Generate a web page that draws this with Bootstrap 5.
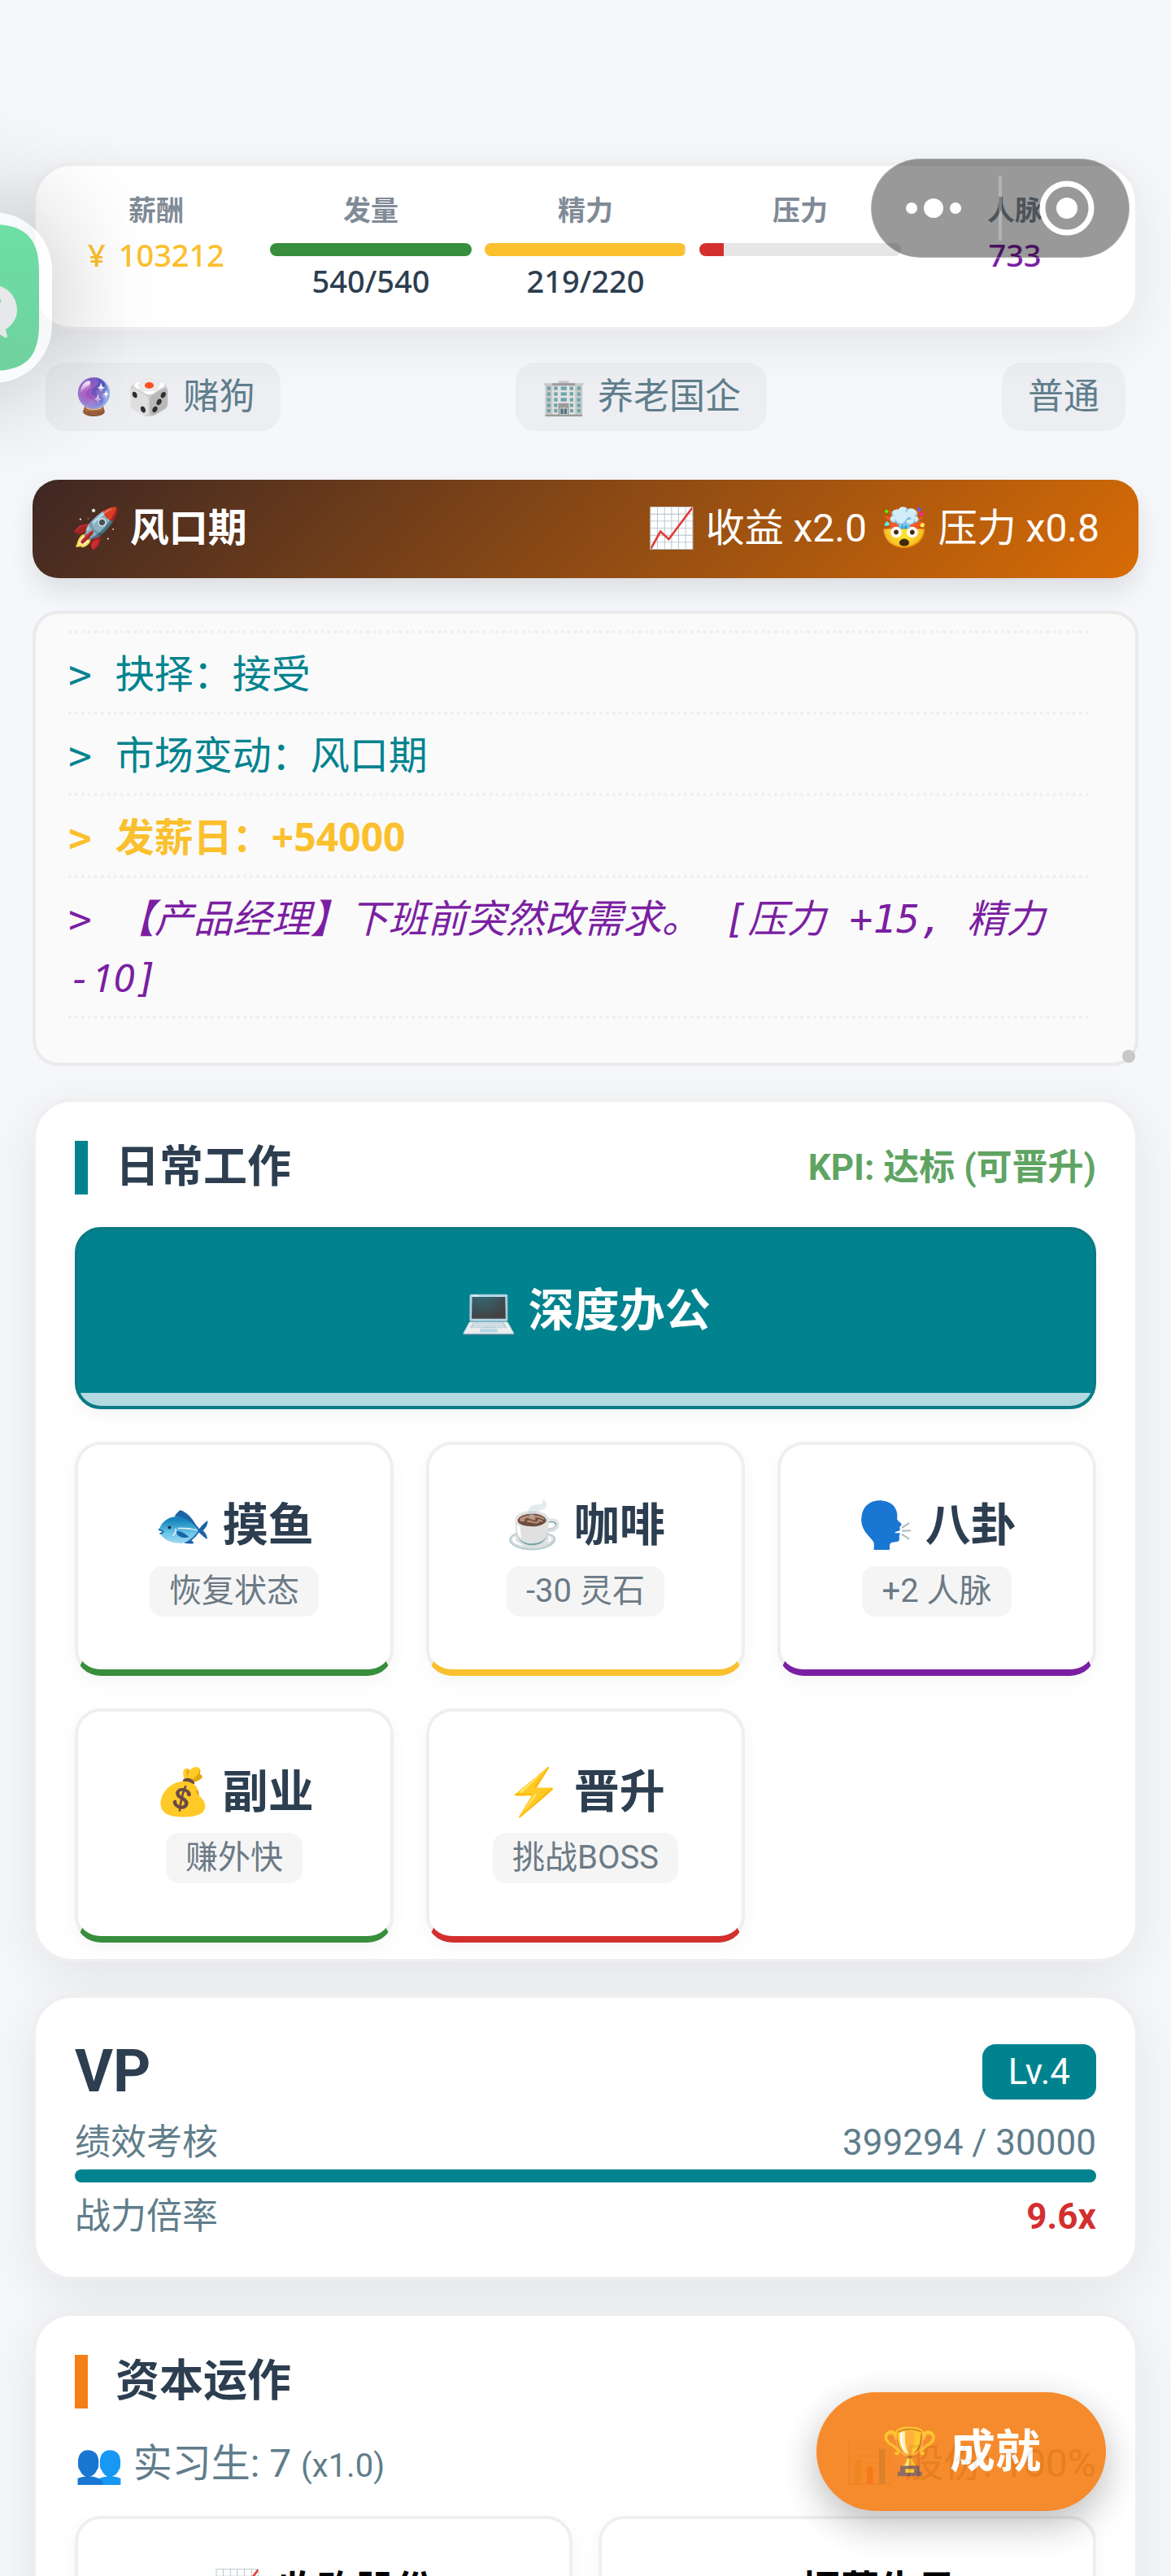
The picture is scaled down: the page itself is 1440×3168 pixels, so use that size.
<!DOCTYPE html>
<html lang="zh-CN">
<head>
<meta charset="utf-8">
<meta name="viewport" content="width=device-width, initial-scale=1">
<title>职场模拟器</title>
<link href="https://cdn.jsdelivr.net/npm/bootstrap@5.3.0/dist/css/bootstrap.min.css" rel="stylesheet">
<style>
:root{--ink:#2c3e50;--muted:#607d8b;--teal:#00838f;--green:#388e3c;--gold:#fbc02d;--red:#d32f2f;--purple:#7b1fa2;--line:#efefef}
body{background:#f5f7fb;color:var(--ink);font-family:Roboto,"Noto Sans CJK SC","Noto Color Emoji",sans-serif;font-size:44px;line-height:66px}
.app-scroll{scrollbar-width:none}
.app-scroll::-webkit-scrollbar{display:none}
.app-page{padding:200px 40px 40px;gap:40px}
.panel{background:#fff;border:4px solid var(--line);border-radius:48px;box-shadow:0 16px 64px rgba(0,0,0,.08)}
.stats-panel{display:grid;grid-template-columns:repeat(5,minmax(0,1fr));gap:16px;padding:24px 24px 34px;text-align:center}
.stat-label{font-size:34px;line-height:62px;font-weight:700;color:#808b96}
.stat-value{font:500 38px/46px "Noto Sans","Noto Sans CJK SC",sans-serif;color:var(--ink)}
.meter{height:16px;border-radius:8px;background:#e6e6e6}
.stat-meter{margin:9px 0 7px}
.c-gold{color:var(--gold)}.c-purple{color:var(--purple)}.c-teal{color:var(--teal)}.c-red{color:var(--red)}
.bg-hair{background:var(--green)}.bg-energy{background:var(--gold)}.bg-stress{background:var(--red)}.bg-teal{background:var(--teal)}
.tag-chip{background:rgba(0,0,0,.035);border-radius:24px;padding:0 32px;line-height:84px;color:var(--muted)}
.emo{margin-right:3px}
.event-banner{padding:27px 48px 28px;border-radius:32px;color:#fff;font-size:48px;background:linear-gradient(135deg,#3e2723,#d86c06);box-shadow:0 16px 32px rgba(0,0,0,.1);margin-top:20px}
.event-banner h1{font-size:48px;line-height:66px;font-weight:700}
.log-box{background:#fafafa;border:4px solid #eaeaea;border-radius:32px;padding:20px 56px 54px 40px;font:48px/72px "DejaVu Sans Mono","Noto Sans CJK SC",monospace}
.log-row{padding:14px 0 10px;border-bottom:4px dotted #eee}
.log-row:first-child{border-top:4px dotted #eee}
.log-num{font-family:"Noto Sans",sans-serif}
.log-thumb{right:0;bottom:0;width:16px;height:16px;border-radius:50%;background:#c8c8c8}
.sec-title{font-size:54px;line-height:66px;font-weight:700;border-left:16px solid var(--teal);padding-left:34px}
.sec-orange{border-color:#f57f17}
.kpi-note{font-weight:700;color:#5fa463}
.work-panel{padding:48px 48px 20px}
.work-btn,.work-btn:hover{height:224px;border:4px solid #0a7a84;border-radius:32px;background:var(--teal);color:#fff;font-size:56px;font-weight:700;padding:0 0 18px;overflow:hidden;box-shadow:0 8px 24px rgba(0,0,0,.04);margin:40px 0}
.work-strip{left:0;right:0;bottom:0;height:16px;background:#b2dae0}
.act-grid{display:grid;grid-template-columns:repeat(3,minmax(0,1fr));gap:40px}
.act-btn{height:288px;background:#fff;border:4px solid var(--line);border-bottom-width:8px;border-radius:32px;color:var(--ink);padding:0 0 65px;box-shadow:0 8px 24px rgba(0,0,0,.04)}
.act-name{font-size:56px;line-height:84px;font-weight:700}
.act-hint{background:#f5f5f5;border-radius:16px;padding:0 24px;font-size:40px;line-height:62px;color:#6c7a86;margin-top:8px}
.b-green{border-bottom-color:var(--green)}.b-gold{border-bottom-color:var(--gold)}.b-purple{border-bottom-color:var(--purple)}.b-red{border-bottom-color:var(--red)}
.rank-panel{padding:48px 48px 41px}
.rank-name{font-size:72px;line-height:86px;font-weight:700}
.level-pill{background:var(--teal);color:#fff;border-radius:16px;padding:0 32px;line-height:68px}
.soft{color:var(--muted)}
.rank-head{margin-bottom:11px}
.rank-meter{margin:0 0 9px}
.deal-info{font-size:48px;line-height:72px;margin:32px 0 25px}
.deal-info small{font-size:40px}
.deal-grid{display:grid;grid-template-columns:repeat(2,minmax(0,1fr));gap:32px}
.deal-btn{height:224px;background:#fff;border:4px solid var(--line);border-radius:32px;color:#000;font-size:48px;line-height:72px;font-weight:700;padding:0 0 40px;box-shadow:0 8px 24px rgba(0,0,0,.04)}
.deal-btn .emo{margin-right:8px}
.fab,.fab:hover{position:fixed;right:80px;bottom:80px;height:146px;padding:0 80px;border:0;border-radius:73px;background:#f57f17;color:#fff;font-size:56px;font-weight:700;opacity:.9;box-shadow:0 16px 48px rgba(0,0,0,.3)}
.capsule{position:fixed;top:194px;right:50px;width:320px;height:124px}
.chat-float{position:fixed;top:261px;left:-146px;width:210px;height:210px;border-radius:72px;background:rgba(255,255,255,.5);box-shadow:0 0 140px rgba(0,0,0,.26)}
</style>
<script src="https://cdn.jsdelivr.net/npm/bootstrap@5.3.0/dist/js/bootstrap.bundle.min.js"></script>
</head>
<body>
<div class="app-scroll overflow-auto vh-100">
<main class="app-page d-flex flex-column">
  <section class="panel stats-panel">
    <div><div class="stat-label">薪酬</div><div class="stat-value c-gold d-flex justify-content-center gap-3"><span>¥</span><span>103212</span></div></div>
    <div><div class="stat-label">发量</div><div class="meter stat-meter overflow-hidden"><div class="h-100 bg-hair" style="width:100%"></div></div><div class="stat-value">540/540</div></div>
    <div><div class="stat-label">精力</div><div class="meter stat-meter overflow-hidden"><div class="h-100 bg-energy" style="width:99%"></div></div><div class="stat-value">219/220</div></div>
    <div><div class="stat-label">压力</div><div class="meter stat-meter overflow-hidden"><div class="h-100 bg-stress" style="width:12%"></div></div></div>
    <div><div class="stat-label">人脉</div><div class="stat-value c-purple">733</div></div>
  </section>

  <div class="d-flex justify-content-between px-3">
    <span class="tag-chip"><span class="emo">🔮</span> <span class="emo">🎲</span> 赌狗</span>
    <span class="tag-chip"><span class="emo">🏢</span> 养老国企</span>
    <span class="tag-chip">普通</span>
  </div>

  <section class="event-banner d-flex justify-content-between align-items-center">
    <h1 class="m-0">🚀 风口期</h1>
    <div class="d-flex gap-3"><span>📈 收益 x2.0</span><span>🤯 压力 x0.8</span></div>
  </section>

  <section class="log-box position-relative">
    <div class="log-row c-teal">&gt; 抉择：接受</div>
    <div class="log-row c-teal">&gt; 市场变动：风口期</div>
    <div class="log-row c-gold fw-bold">&gt; 发薪日：<span class="log-num">+54000</span></div>
    <div class="log-row c-purple fst-italic">&gt; 【产品经理】下班前突然改需求。 [压力 +15, 精力 <span class="text-nowrap">-<span class="log-num">10</span>]</span></div>
    <div class="log-thumb position-absolute"></div>
  </section>

  <section class="panel work-panel">
    <div class="d-flex justify-content-between"><h2 class="sec-title m-0">日常工作</h2><span class="kpi-note">KPI: 达标 (可晋升)</span></div>
    <button type="button" class="btn work-btn w-100 position-relative">💻 深度办公<span class="work-strip position-absolute"></span></button>
    <div class="act-grid">
      <button type="button" class="btn act-btn b-green d-flex flex-column align-items-center justify-content-end"><span class="act-name">🐟 摸鱼</span><span class="act-hint">恢复状态</span></button>
      <button type="button" class="btn act-btn b-gold d-flex flex-column align-items-center justify-content-end"><span class="act-name">☕ 咖啡</span><span class="act-hint">-30 灵石</span></button>
      <button type="button" class="btn act-btn b-purple d-flex flex-column align-items-center justify-content-end"><span class="act-name">🗣️ 八卦</span><span class="act-hint">+2 人脉</span></button>
      <button type="button" class="btn act-btn b-green d-flex flex-column align-items-center justify-content-end"><span class="act-name">💰 副业</span><span class="act-hint">赚外快</span></button>
      <button type="button" class="btn act-btn b-red d-flex flex-column align-items-center justify-content-end"><span class="act-name">⚡ 晋升</span><span class="act-hint">挑战BOSS</span></button>
    </div>
  </section>

  <section class="panel rank-panel">
    <div class="rank-head d-flex justify-content-between align-items-center"><h2 class="rank-name m-0">VP</h2><span class="level-pill">Lv.4</span></div>
    <div class="d-flex justify-content-between soft"><span>绩效考核</span><span>399294 / 30000</span></div>
    <div class="meter rank-meter overflow-hidden"><div class="h-100 bg-teal" style="width:100%"></div></div>
    <div class="d-flex justify-content-between soft"><span>战力倍率</span><span class="fw-bold c-red">9.6x</span></div>
  </section>

  <section class="panel p-5">
    <h2 class="sec-title sec-orange m-0">资本运作</h2>
    <div class="deal-info d-flex justify-content-between soft"><span>👥 实习生: 7 <small>(x1.0)</small></span><span>📊 股份: 100%</span></div>
    <div class="deal-grid">
      <button type="button" class="btn deal-btn"><span class="emo">📈</span> 收购股份</button>
      <button type="button" class="btn deal-btn"><span class="emo">🤝</span> 招募牛马</button>
    </div>
  </section>
</main>
</div>

<button type="button" class="btn fab">🏆 成就</button>

<svg class="capsule" viewBox="0 0 320 124" aria-hidden="true">
  <rect x="1" y="1" width="318" height="122" rx="61" fill="#000" fill-opacity=".4" stroke="#fff" stroke-opacity=".25" stroke-width="2"/>
  <g fill="#fff"><circle cx="51" cy="62" r="7"/><circle cx="78" cy="62" r="12"/><circle cx="105" cy="62" r="7"/><circle cx="242" cy="62" r="13"/></g>
  <path d="M160 22V102" stroke="#fff" stroke-opacity=".25" stroke-width="4"/>
  <circle cx="242" cy="62" r="30" fill="none" stroke="#fff" stroke-width="7"/>
</svg>

<div class="chat-float">
  <svg class="d-block" width="210" height="210" viewBox="-146 0 210 210" aria-hidden="true">
    <defs><linearGradient id="leaf" x1="0" y1="0" x2="0" y2="1"><stop offset="0" stop-color="#6ddfa4"/><stop offset="1" stop-color="#70d19f"/></linearGradient></defs>
    <path d="M-66 15H-8C32 15 48 34 48 72V138C48 177 32 195-8 195H-66Z" fill="url(#leaf)"/>
    <path d="M-12 89C8 89 21 103 21 120C21 130 16 138 7 144L9 153Q8 155 6 154L-4 148Q-8 149-12 149C-32 149-46 136-46 119C-46 102-31 89-12 89Z" fill="#e6e8ea"/>
    <circle cx="-3" cy="109" r="4" fill="#6dd8a2"/><circle cx="-24" cy="109" r="4" fill="#6dd8a2"/>
  </svg>
</div>
</body>
</html>
